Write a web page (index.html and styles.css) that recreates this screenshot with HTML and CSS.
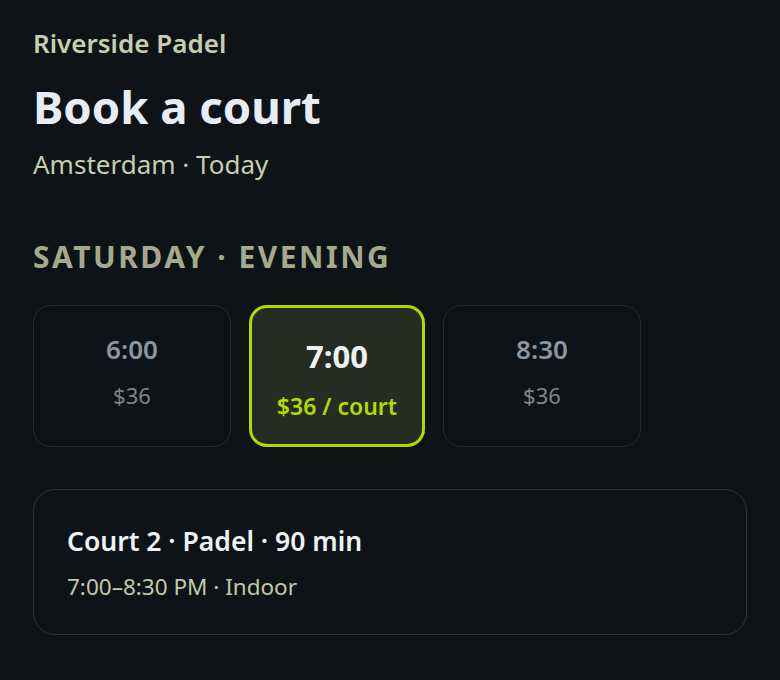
FILE: index.html
```html
<!DOCTYPE html>
<html lang="en">
<head>
    <meta charset="UTF-8">
    <meta name="viewport" content="width=device-width, initial-scale=1.0">
    <title>Riverside Padel - Book a court</title>
    <link rel="stylesheet" href="styles.css">
</head>
<body>
    <div class="page">
        <div class="venue">Riverside Padel</div>
        <h1>Book a court</h1>
        <p class="subtitle">Amsterdam · Today</p>

        <h2 class="section-title">Saturday · Evening</h2>

        <div class="slots">
            <div class="slot">
                <div class="slot-time">6:00</div>
                <div class="slot-price">$36</div>
            </div>
            <div class="slot selected">
                <div class="slot-time">7:00</div>
                <div class="slot-price">$36 / court</div>
            </div>
            <div class="slot">
                <div class="slot-time">8:30</div>
                <div class="slot-price">$36</div>
            </div>
        </div>

        <div class="summary">
            <div class="summary-title">Court 2 · Padel · 90 min</div>
            <div class="summary-meta">7:00–8:30 PM · Indoor</div>
        </div>
    </div>
</body>
</html>
```

FILE: styles.css
```css
* { margin: 0; padding: 0; box-sizing: border-box; }

body {
    font-family: "Noto Sans", "Open Sans", sans-serif;
    background: #0d1317;
    color: #e6edf3;
    min-height: 100vh;
}

.page {
    padding: 27px 33px;
}

.venue {
    font-size: 26px;
    font-weight: 600;
    color: #c9cdb0;
    line-height: 32px;
}

h1 {
    font-size: 45.5px;
    font-weight: 700;
    color: #e6edf3;
    line-height: 56px;
    margin-top: 19px;
}

.subtitle {
    font-size: 26px;
    color: #c9cdb0;
    line-height: 34px;
    margin-top: 13px;
}

.section-title {
    font-size: 30px;
    font-weight: 700;
    text-transform: uppercase;
    letter-spacing: 2.5px;
    color: #a7a98f;
    line-height: 40px;
    margin-top: 56px;
}

.slots {
    display: flex;
    gap: 18px;
    margin-top: 28px;
}

.slot {
    width: 198px;
    height: 142px;
    border: 1px solid #252b2f;
    border-radius: 18px;
    padding-bottom: 10px;
    display: flex;
    flex-direction: column;
    align-items: center;
    justify-content: center;
    gap: 16px;
}

.slot-time {
    font-size: 26px;
    font-weight: 600;
    color: #8c96a0;
    line-height: 32px;
}

.slot-price {
    font-size: 22px;
    color: #7e8580;
    line-height: 28px;
}

.slot.selected {
    width: 176px;
    border: 3px solid #b4d900;
    background: #262c22;
    padding: 5px 0 0;
}

.slot.selected .slot-time {
    font-size: 31px;
    font-weight: 700;
    color: #eef2f4;
    line-height: 38px;
}

.slot.selected .slot-price {
    font-weight: 600;
    font-size: 23px;
    color: #b4d900;
    line-height: 30px;
}

.summary {
    margin-top: 42px;
    border: 1.5px solid #2d3437;
    border-radius: 22px;
    padding: 34px 33px 32px;
}

.summary-title {
    font-size: 26.5px;
    font-weight: 600;
    color: #eef2f4;
    line-height: 34px;
}

.summary-meta {
    font-size: 22.5px;
    color: #c3c9ac;
    line-height: 30px;
    margin-top: 14px;
}
```
